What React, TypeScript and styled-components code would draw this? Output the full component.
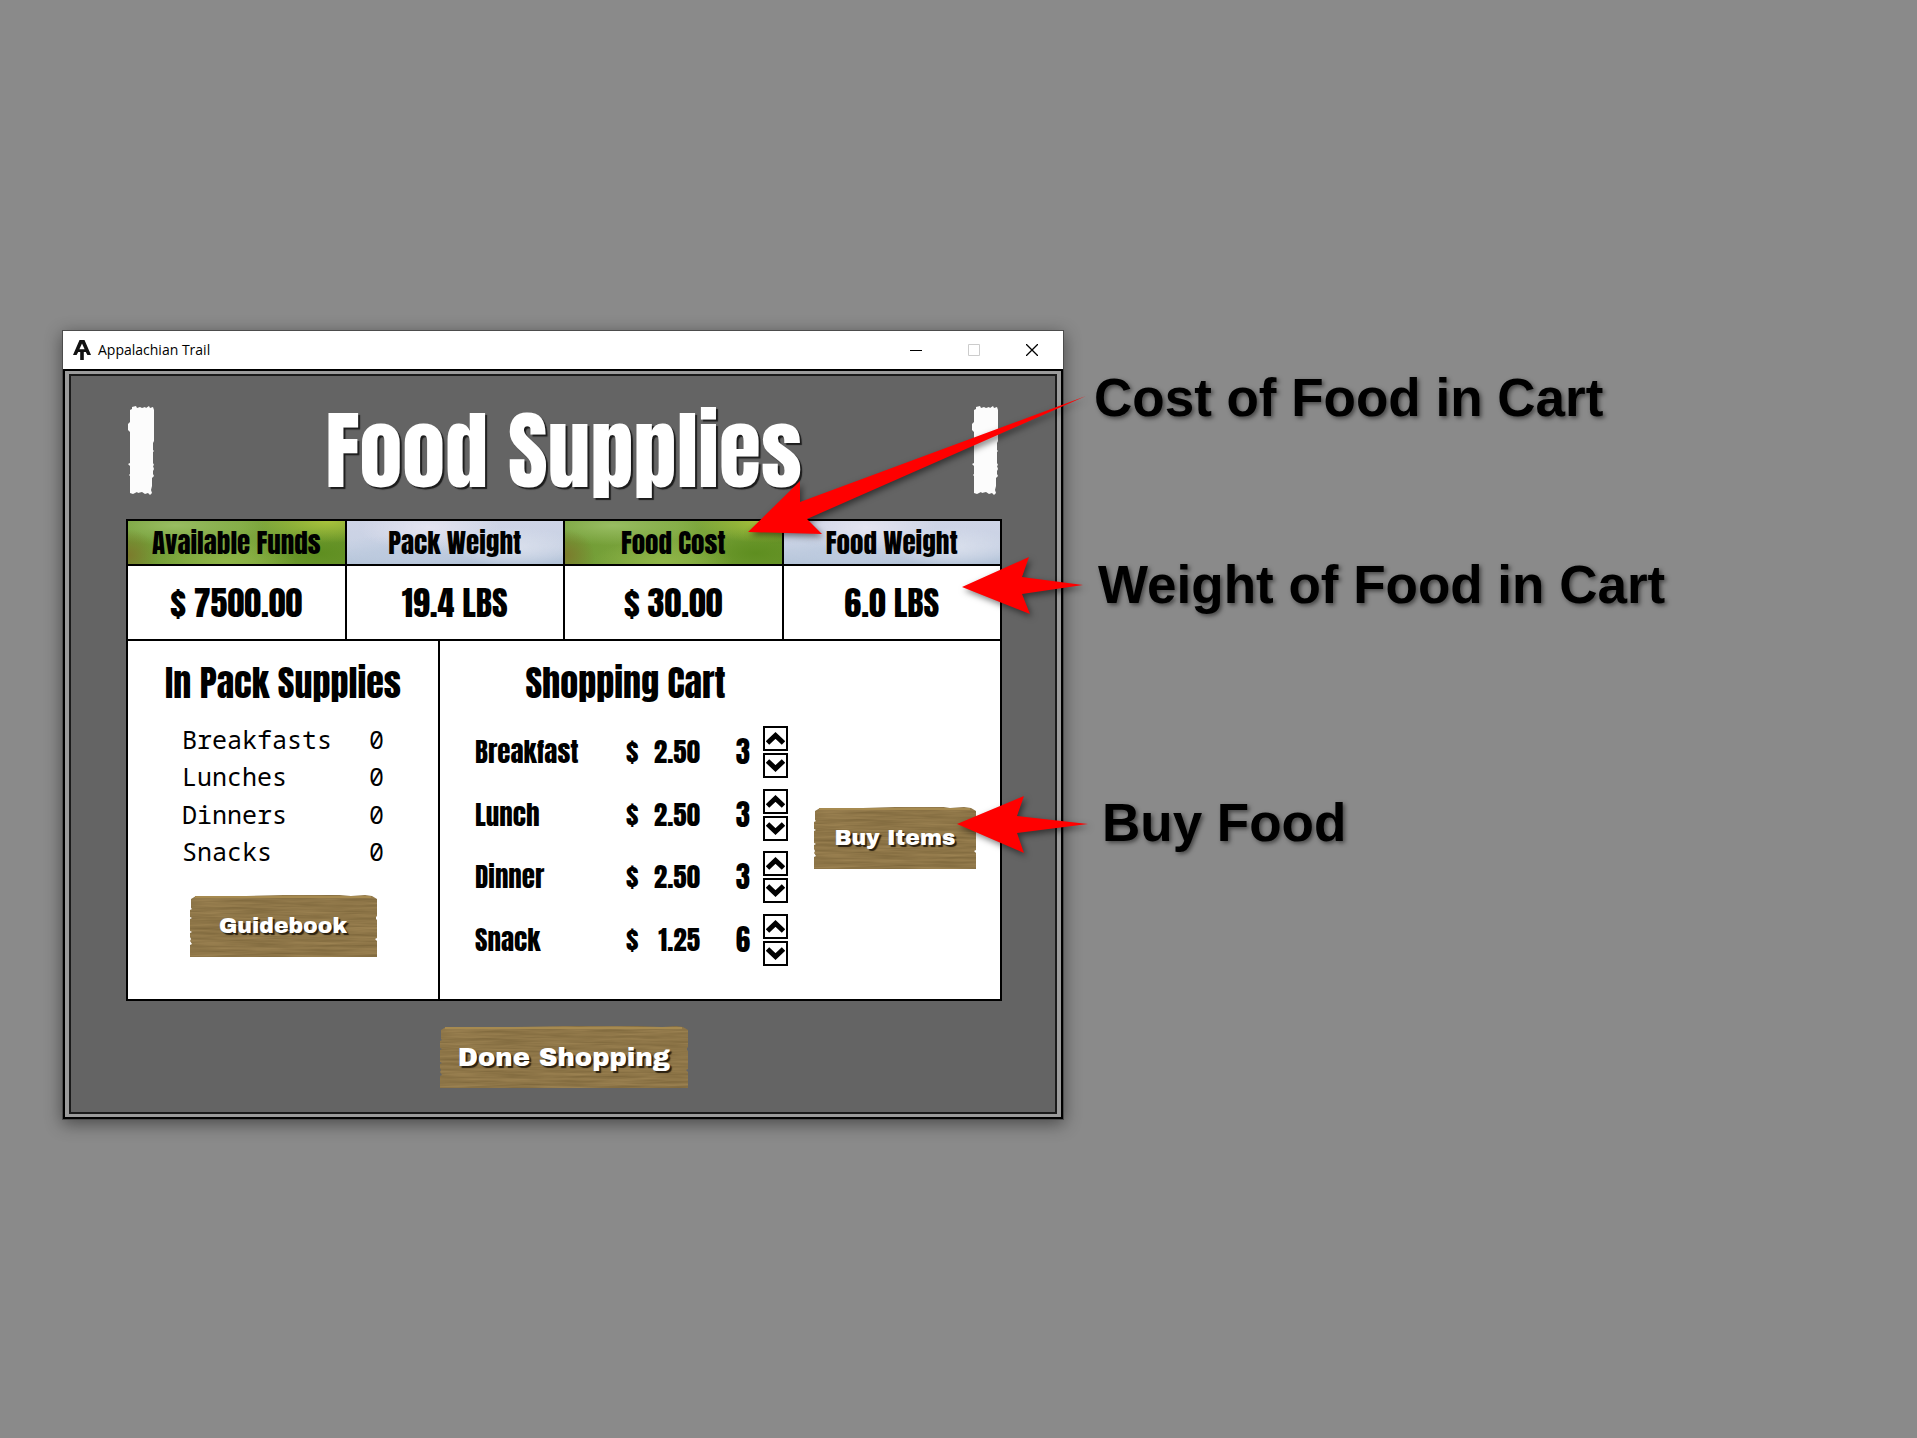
import React, { useState } from "react";
import styled, { createGlobalStyle } from "styled-components";

const poster = `Anton, Impact, "Roboto Condensed", sans-serif`;
const plank = `"Archivo Black", "Work Sans", "Libre Franklin", Inter, "Liberation Sans", sans-serif`;

const GlobalStyle = createGlobalStyle`
  *, *::before, *::after { box-sizing: border-box; }
  body { margin: 0; background: #8a8a8a; font-family: "Liberation Sans", Arial, sans-serif; color: #000; }
  h1, h2, dl, dt, dd { margin: 0; font-weight: 400; }
  button { font: inherit; color: inherit; border: 0; padding: 0; background: none; cursor: pointer; }
`;

const Scene = styled.main`
  position: relative;
  min-height: 100vh;
  padding: 330px 62px 62px;
  overflow: hidden;
`;

const AppWindow = styled.section`
  width: 100%;
  max-width: 1002px;
  border: 1px solid #4c4c4c;
  background: #fff;
  box-shadow: 0 4px 16px rgba(0, 0, 0, 0.45);
`;

const TitleBar = styled.header`
  display: flex;
  align-items: center;
  height: 38px;
  padding: 0 2px 0 10px;
`;

const TitleText = styled.span`
  flex: 1;
  padding-left: 7px;
  font: 14px/20px "Segoe UI", "Open Sans", sans-serif;
`;

const CaptionButton = styled.button<{ $color?: string }>`
  display: grid;
  place-items: center;
  width: 58px;
  height: 38px;
  color: ${(p) => p.$color ?? "#000"};
`;

const Frame = styled.div`
  border: 2px solid #000;
  background: #9b9b9b;
  padding: 3px 4px;
`;

const Screen = styled.div`
  border: 2px solid #1a1a1a;
  padding: 30px 53px 24px 55px;
  background: #646464;
`;

const Heading = styled.div`
  display: flex;
  align-items: center;
  justify-content: space-between;
  height: 90px;
  margin-bottom: 23px;
  padding: 0 3px 0 2px;
`;

const Title = styled.h1`
  font: 400 86px/90px ${poster};
  color: #fff;
  text-shadow: 2px 2px 1px #1c1c1c;
`;

const Board = styled.div`
  display: grid;
  gap: 2px;
  padding: 2px;
  background: #000;
`;

const Stats = styled.dl`
  display: grid;
  grid-template-columns: repeat(4, 1fr);
  gap: 2px;
`;

const Stat = styled.div`
  display: grid;
  gap: 2px;
  text-align: center;
`;

const leaf = `
  radial-gradient(ellipse 70px 22px at 92% 0%, #a9c33c, transparent),
  radial-gradient(ellipse 30px 26px at 0% 80%, #7c7a2c, transparent),
  radial-gradient(ellipse 90px 20px at 22% 10%, #98bd62, transparent),
  radial-gradient(ellipse 70px 22px at 45% 95%, #8fb548, transparent),
  radial-gradient(ellipse 70px 26px at 88% 75%, #5e8e20, transparent),
  linear-gradient(100deg, #6f9a34, #7fa83f 50%, #6b962c)`;

const sky = `
  radial-gradient(ellipse 70px 24px at 38% 15%, #e4e4f0, transparent),
  radial-gradient(ellipse 60px 20px at 78% 60%, #d9dfec, transparent),
  radial-gradient(ellipse 80px 18px at 25% 75%, #bccade, transparent),
  linear-gradient(180deg, #ced4e6, #c9d2e4 60%, #b3c3d8)`;

const StatName = styled.dt<{ $scene: "leaf" | "sky" }>`
  font: 27px/43px ${poster};
  background: ${(p) => (p.$scene === "leaf" ? leaf : sky)};
`;

const StatValue = styled.dd`
  font: 34px/73px ${poster};
  background: #fff;
`;

const Panes = styled.div`
  display: grid;
  grid-template-columns: 310fr 560fr;
  gap: 2px;
`;

const Pane = styled.section`
  padding-top: 20px;
  background: #fff;
`;

const PackPane = styled(Pane)`
  display: flex;
  flex-direction: column;
  align-items: center;
  padding-bottom: 42px;
`;

const CartPane = styled(Pane)`
  display: grid;
  grid-template-columns: 313px 162px;
  grid-template-rows: auto auto;
  column-gap: 26px;
  align-items: center;
  align-content: start;
  padding-left: 35px;
`;

const PaneTitle = styled.h2<{ $inset?: number }>`
  margin-bottom: 16px;
  padding-right: ${(p) => p.$inset ?? 0}px;
  font: 400 36px/44px ${poster};
  text-align: center;
`;

const PackTable = styled.table`
  width: 202px;
  height: 150px;
  margin-bottom: 24px;
  border-collapse: collapse;
  font: 25px/30px "Noto Sans Mono", Consolas, "DejaVu Sans Mono", monospace;
  th, td { padding: 0 0 2px; font-weight: 400; }
  th { text-align: left; }
  td { text-align: right; }
`;

const CartTable = styled.table`
  width: 100%;
  height: 250px;
  border-collapse: collapse;
  font: 27px/32px ${poster};
  th, td { padding: 0; font-weight: 400; }
  th { text-align: left; }
`;

const Price = styled.td`
  width: 74px;
`;

const PriceLine = styled.span`
  display: flex;
  justify-content: space-between;
`;

const Quantity = styled.td`
  width: 50px;
  font-size: 29px;
  text-align: right;
`;

const Spinner = styled.td`
  width: 38px;
`;

const SpinnerStack = styled.span`
  display: grid;
  gap: 2px;
  justify-content: end;
`;

const SpinButton = styled.button`
  display: grid;
  place-items: center;
  width: 25px;
  height: 25px;
  border: 2px solid #000;
  background: #fff;
`;

const WoodButton = styled.button<{ $width: number; $size: number }>`
  position: relative;
  width: ${(p) => p.$width}px;
  height: 62px;
  font: 400 ${(p) => p.$size}px/62px ${plank};
  color: #fff;
  text-shadow: 2px 2px 1px #2a2010;
`;

const Grain = styled.svg`
  position: absolute;
  inset: 0;
  width: 100%;
  height: 100%;
`;

const Label = styled.span`
  position: relative;
`;

const Footer = styled.footer`
  display: flex;
  justify-content: center;
  padding-top: 25px;
`;

const BuySlot = styled.div`
  padding-bottom: 16px;
`;

const Arrows = styled.svg`
  position: absolute;
  top: 0;
  left: 0;
  pointer-events: none;
  filter: drop-shadow(2px 3px 3px rgba(0, 0, 0, 0.5));
`;

const Note = styled.p<{ $x: number; $y: number }>`
  position: absolute;
  left: ${(p) => p.$x}px;
  top: ${(p) => p.$y}px;
  margin: 0;
  font: 700 53px/60px "Liberation Sans", Arial, sans-serif;
  white-space: nowrap;
  text-shadow: 2px 2px 4px rgba(0, 0, 0, 0.5);
`;

function TrailLogo() {
  return (
    <svg width="18" height="20" viewBox="0 0 18 20" fill="#111" aria-hidden="true">
      <path
        fillRule="evenodd"
        d="M6.5 0 H11.5 L18 15 H14.4 L12.8 12 H10.8 V20 H7.2 V12 H5.2 L3.6 15 H0 Z M9 3.4 L6.4 9.2 H11.6 Z"
      />
    </svg>
  );
}

function Blaze() {
  return (
    <svg width="27" height="90" viewBox="0 0 27 90" fill="#fcfcfc" aria-hidden="true">
      <path d="M2 4 L4 3 L4 1 L8 0 L9 2 L12 1 L14 2 L17 1 L18 2 L21 0 L22 2 L25 1 L26 4 L26 35 L25 37 L25 44 L26 45 L25 46 L25 57 L26 59 L25 60 L26 63 L25 65 L25 68 L26 70 L24 72 L24 80 L23 84 L24 87 L22 89 L20 87 L17 88 L14 86 L10 87 L9 86 L5 88 L2 87 L2 70 L1 69 L2 68 L2 60 L0 58 L2 57 L2 26 L0 24 L0 18 L2 16 Z" />
    </svg>
  );
}

function Wood({ id, width }: { id: string; width: number }) {
  const w = width;
  return (
    <Grain viewBox={`0 0 ${w} 62`} preserveAspectRatio="none" aria-hidden="true">
      <defs>
        <filter id={`${id}-grain`} x="0" y="0" width="100%" height="100%" colorInterpolationFilters="sRGB">
          <feTurbulence type="fractalNoise" baseFrequency="0.02 0.4" numOctaves="3" seed="7" />
          <feColorMatrix values="0.17 0 0 0 0.47  0.15 0 0 0 0.385  0.12 0 0 0 0.22  0 0 0 0 1" />
          <feComposite in2="SourceGraphic" operator="in" />
        </filter>
      </defs>
      <path
        filter={`url(#${id}-grain)`}
        d={`M1 4 L6 1 H${w * 0.3} L${w * 0.5} 0 H${w * 0.8} L${w - 26} 1 L${w - 12} 0 L${w - 5} 1 L${w} 4 V21 L${w - 1} 22 V24 L${w} 25 V43 L${w - 2} 44 L${w} 46 V62 H0 V50 L2 49 L0 46 L1 44 L0 42 V38 L2 37 L0 36 V24 L2 23 L0 22 V15 L2 14 L1 13 Z`}
      />
      <path d={`M5 2 H${w - 6}`} stroke="#a68a50" strokeWidth="2" />
    </Grain>
  );
}

function Chevron({ down }: { down?: boolean }) {
  return (
    <svg width="19" height="15" viewBox="0 0 19 15" fill="none" stroke="#000" strokeWidth="5" aria-hidden="true">
      <path d={down ? "M1.5 3 L9.5 10.5 L17.5 3" : "M1.5 12 L9.5 4.5 L17.5 12"} />
    </svg>
  );
}

const meals = [
  { name: "Breakfast", plural: "Breakfasts", price: 2.5, start: 3 },
  { name: "Lunch", plural: "Lunches", price: 2.5, start: 3 },
  { name: "Dinner", plural: "Dinners", price: 2.5, start: 3 },
  { name: "Snack", plural: "Snacks", price: 1.25, start: 6 },
];

const arrows = [
  "748,532 800,481 800,502 1086,396 807,519 822,534",
  "962,587 1029,557 1022,577 1083,585 1022,594 1030,614",
  "957,824 1024,796 1017,816 1088,824 1017,833 1024,853",
];

export default function App() {
  const [counts, setCounts] = useState(meals.map((m) => m.start));
  const step = (i: number, by: number) =>
    setCounts((c) => c.map((n, k) => (k === i ? Math.max(0, n + by) : n)));
  const cost = meals.reduce((sum, m, i) => sum + m.price * counts[i], 0);
  const weight = counts.reduce((a, b) => a + b, 0) * 0.4;

  const stats = [
    { name: "Available Funds", value: "$ 7500.00", scene: "leaf" as const },
    { name: "Pack Weight", value: "19.4 LBS", scene: "sky" as const },
    { name: "Food Cost", value: `$ ${cost.toFixed(2)}`, scene: "leaf" as const },
    { name: "Food Weight", value: `${weight.toFixed(1)} LBS`, scene: "sky" as const },
  ];

  return (
    <Scene>
      <GlobalStyle />
      <AppWindow>
        <TitleBar>
          <TrailLogo />
          <TitleText>Appalachian Trail</TitleText>
          <CaptionButton aria-label="Minimize">
            <svg width="12" height="12"><path d="M0 6.5 H12" stroke="currentColor" /></svg>
          </CaptionButton>
          <CaptionButton aria-label="Maximize" $color="#ccc">
            <svg width="12" height="12"><path d="M0.5 0.5 H11.5 V11.5 H0.5 Z" fill="none" stroke="currentColor" /></svg>
          </CaptionButton>
          <CaptionButton aria-label="Close">
            <svg width="12" height="12"><path d="M0 0 L12 12 M12 0 L0 12" stroke="currentColor" strokeWidth="1.3" /></svg>
          </CaptionButton>
        </TitleBar>
        <Frame>
          <Screen>
            <Heading>
              <Blaze />
              <Title>Food Supplies</Title>
              <Blaze />
            </Heading>
            <Board>
              <Stats>
                {stats.map((s) => (
                  <Stat key={s.name}>
                    <StatName $scene={s.scene}>{s.name}</StatName>
                    <StatValue>{s.value}</StatValue>
                  </Stat>
                ))}
              </Stats>
              <Panes>
                <PackPane>
                  <PaneTitle>In Pack Supplies</PaneTitle>
                  <PackTable>
                    <tbody>
                      {meals.map((m) => (
                        <tr key={m.name}>
                          <th scope="row">{m.plural}</th>
                          <td>0</td>
                        </tr>
                      ))}
                    </tbody>
                  </PackTable>
                  <WoodButton $width={187} $size={22}>
                    <Wood id="guidebook" width={187} />
                    <Label>Guidebook</Label>
                  </WoodButton>
                </PackPane>
                <CartPane>
                  <PaneTitle $inset={12}>Shopping Cart</PaneTitle>
                  <span />
                  <CartTable>
                    <tbody>
                      {meals.map((m, i) => (
                        <tr key={m.name}>
                          <th scope="row">{m.name}</th>
                          <Price>
                            <PriceLine>
                              <span>$</span>
                              <span>{m.price.toFixed(2)}</span>
                            </PriceLine>
                          </Price>
                          <Quantity>{counts[i]}</Quantity>
                          <Spinner>
                            <SpinnerStack>
                              <SpinButton aria-label={`More ${m.plural}`} onClick={() => step(i, 1)}>
                                <Chevron />
                              </SpinButton>
                              <SpinButton aria-label={`Fewer ${m.plural}`} onClick={() => step(i, -1)}>
                                <Chevron down />
                              </SpinButton>
                            </SpinnerStack>
                          </Spinner>
                        </tr>
                      ))}
                    </tbody>
                  </CartTable>
                  <BuySlot>
                    <WoodButton $width={162} $size={22}>
                      <Wood id="buy" width={162} />
                      <Label>Buy Items</Label>
                    </WoodButton>
                  </BuySlot>
                </CartPane>
              </Panes>
            </Board>
            <Footer>
              <WoodButton $width={248} $size={26}>
                <Wood id="done" width={248} />
                <Label>Done Shopping</Label>
              </WoodButton>
            </Footer>
          </Screen>
        </Frame>
      </AppWindow>
      <Arrows width="1100" height="900" viewBox="0 0 1100 900" aria-hidden="true">
        {arrows.map((points) => (
          <polygon key={points} points={points} fill="#f00" />
        ))}
      </Arrows>
      <Note $x={1094} $y={368}>Cost of Food in Cart</Note>
      <Note $x={1098} $y={555}>Weight of Food in Cart</Note>
      <Note $x={1102} $y={793}>Buy Food</Note>
    </Scene>
  );
}
